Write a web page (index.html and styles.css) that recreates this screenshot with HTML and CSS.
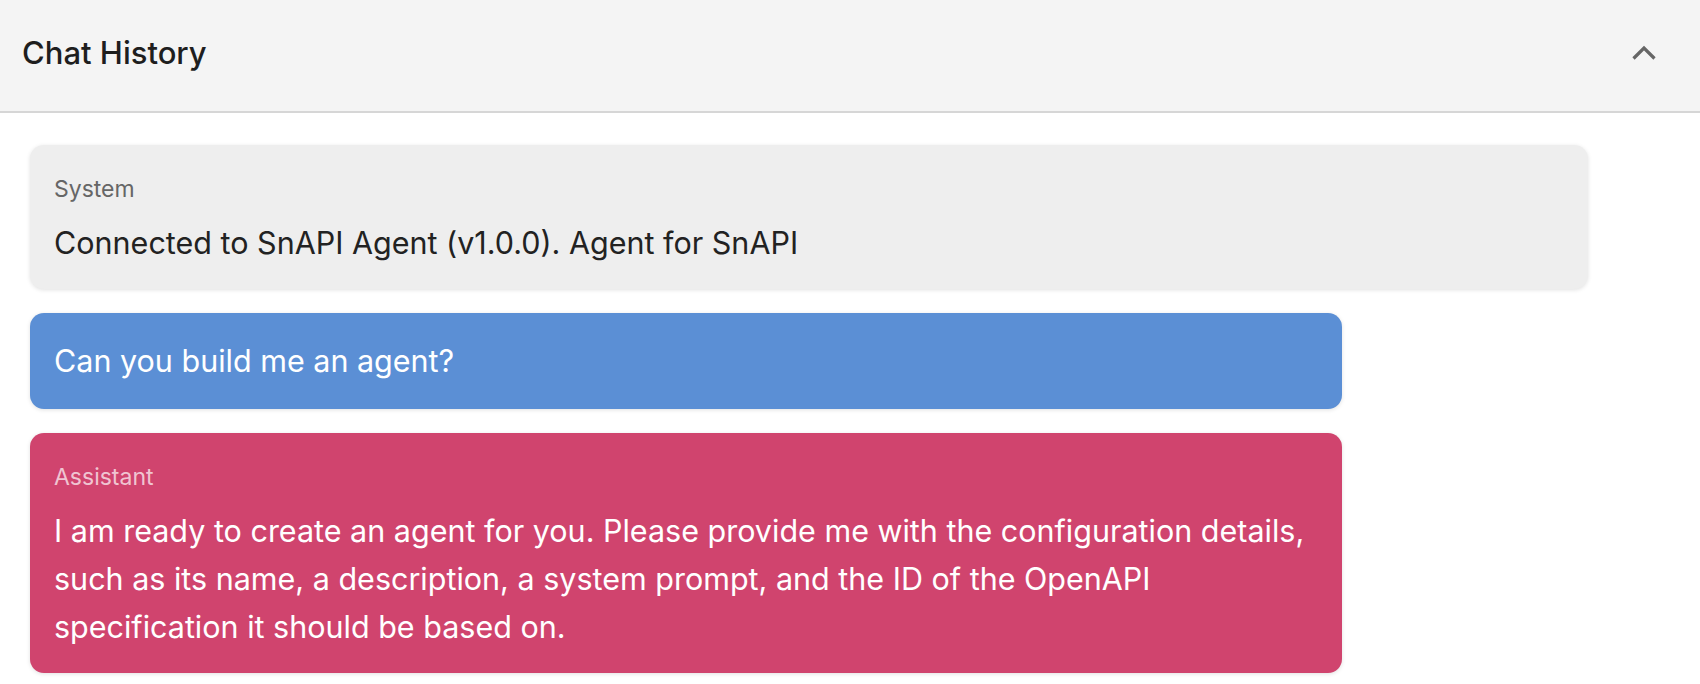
FILE: index.html
```html
<!DOCTYPE html>
<html lang="en">
<head>
  <meta charset="UTF-8">
  <title>Chat History</title>
  <link rel="stylesheet" href="styles.css">
</head>
<body>
  <div class="panel">
    <div class="panel-header">
      <h2>Chat History</h2>
      <button class="toggle" aria-label="Collapse">
        <svg width="24" height="16" viewBox="0 0 24 16">
          <polyline points="1.5,13.5 12,3 22.5,13.5" fill="none" stroke="#666" stroke-width="3.2"/>
        </svg>
      </button>
    </div>

    <div class="messages">
      <div class="msg system">
        <div class="role">System</div>
        <div class="content">Connected to SnAPI Agent (v1.0.0). Agent for SnAPI</div>
      </div>

      <div class="msg user">
        <div class="content">Can you build me an agent?</div>
      </div>

      <div class="msg assistant">
        <div class="role">Assistant</div>
        <div class="content">I am ready to create an agent for you. Please provide me with the configuration details, such as its name, a description, a system prompt, and the ID of the OpenAPI specification it should be based on.</div>
      </div>
    </div>
  </div>
</body>
</html>
```

FILE: styles.css
```css
body {
  font-family: Inter, 'Noto Sans', sans-serif;
  margin: 0;
  background: white;
  color: #222;
}

.panel-header {
  display: flex;
  align-items: center;
  justify-content: space-between;
  box-sizing: border-box;
  height: 113px;
  padding: 0 40px 6px 22px;
  background-color: #f4f4f4;
  border-bottom: 2px solid #d6d6d6;
}

.panel-header h2 {
  margin: 0;
  font-size: 31px;
  font-weight: 500;
  color: #1e1e1e;
}

.toggle {
  background: none;
  border: none;
  padding: 0;
  width: 32px;
  height: 32px;
  display: flex;
  align-items: center;
  justify-content: center;
  cursor: pointer;
}

.messages {
  display: flex;
  flex-direction: column;
  gap: 24px;
  padding: 32px 30px;
}

.msg {
  box-sizing: border-box;
  padding: 24px 24px;
  border-radius: 14px;
  box-shadow: 0 1px 4px rgba(0, 0, 0, 0.12);
}

.role {
  font-size: 23px;
  line-height: 36px;
  margin-top: 2px;
  margin-bottom: 12px;
}

.content {
  font-size: 30.5px;
  line-height: 48px;
}

.system {
  width: 95%;
  background-color: #eeeeee;
  padding-bottom: 22px;
}

.system .role {
  color: #666;
}

.user {
  width: 80%;
  background-color: #5b8fd5;
  color: white;
}

.assistant {
  width: 80%;
  background-color: #d0446e;
  color: white;
  padding-bottom: 22px;
}

.assistant .role {
  color: rgba(255, 255, 255, 0.7);
}
```
